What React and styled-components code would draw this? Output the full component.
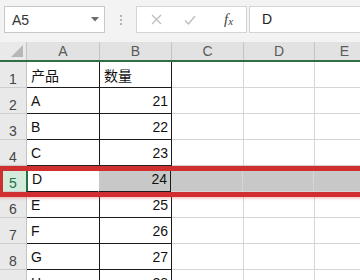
import React from 'react';
import styled, { createGlobalStyle } from 'styled-components';

const GlobalStyle = createGlobalStyle`
    html, body {
        margin: 0;
        padding: 0;
        background: #fff;
    }
    body {
        width: 360px;
        height: 280px;
        overflow: hidden;
        font-family: "Liberation Sans", "Noto Sans CJK SC", sans-serif;
    }
`;

const columns = ['A', 'B', 'C', 'D', 'E'];
const widths = [73, 72, 72, 71, 60];

const rows = [
    ['产品', '数量'],
    ['A', '21'],
    ['B', '22'],
    ['C', '23'],
    ['D', '24'],
    ['E', '25'],
    ['F', '26'],
    ['G', '27'],
    ['H', '28'],
];

const SELECTED_ROW = 5;

export default function App() {
    return (
        <Page>
            <GlobalStyle />
            <FormulaBar>
                <NameBox>
                    <NameText>A5</NameText>
                    <svg width="8" height="5" viewBox="0 0 8 5">
                        <path d="M0 0 L8 0 L4 4.5 Z" fill="#6b6b6b" />
                    </svg>
                </NameBox>
                <Grip>
                    <Dot />
                    <Dot />
                    <Dot />
                </Grip>
                <FxBox>
                    <svg width="11" height="11" viewBox="0 0 11 11">
                        <path d="M1 1 L10 10 M10 1 L1 10" stroke="#bdbdbd" strokeWidth="1.3" fill="none" />
                    </svg>
                    <svg width="12" height="10" viewBox="0 0 12 10">
                        <path d="M1 5.5 L4.5 9 L11 1" stroke="#bdbdbd" strokeWidth="1.3" fill="none" />
                    </svg>
                    <Fx>f<sub>x</sub></Fx>
                </FxBox>
                <FormulaInput>D</FormulaInput>
            </FormulaBar>

            <Sheet>
                <HeaderRow>
                    <Corner>
                        <svg width="12" height="12" viewBox="0 0 12 12">
                            <path d="M12 0 L12 12 L0 12 Z" fill="#b7b7b7" />
                        </svg>
                    </Corner>
                    {columns.map((c, i) => (
                        <ColHeader key={c} width={widths[i]}>{c}</ColHeader>
                    ))}
                </HeaderRow>

                {rows.map((row, r) => {
                    const num = r + 1;
                    const selected = num === SELECTED_ROW;
                    return (
                        <Row key={num}>
                            <RowHeader selected={selected}>{num}</RowHeader>
                            {columns.map((c, i) => {
                                const value = row[i];
                                const bordered = i < 2;
                                return (
                                    <Cell
                                        key={c}
                                        width={widths[i]}
                                        bordered={bordered}
                                        numeric={i === 1 && r > 0}
                                        highlight={selected && i > 0}
                                        active={selected && i === 0}
                                    >
                                        {value}
                                    </Cell>
                                );
                            })}
                        </Row>
                    );
                })}

                <Annotation />
            </Sheet>
        </Page>
    );
}

const Page = styled.div`
    width: 360px;
    height: 280px;
    overflow: hidden;
    background: #fff;
`;

const FormulaBar = styled.div`
    display: flex;
    align-items: flex-start;
    height: 42px;
    padding: 6px 0 0 4px;
    box-sizing: border-box;
    background: #f3f3f3;
`;

const NameBox = styled.div`
    display: flex;
    align-items: center;
    justify-content: space-between;
    width: 101px;
    height: 27px;
    box-sizing: border-box;
    padding: 0 5px 0 7px;
    background: #fff;
    border: 1px solid #c8c8c8;
`;

const NameText = styled.span`
    font-size: 14px;
    color: #333;
`;

const Grip = styled.div`
    display: flex;
    flex-direction: column;
    align-items: center;
    justify-content: center;
    gap: 2px;
    width: 31px;
    height: 27px;
`;

const Dot = styled.span`
    width: 2px;
    height: 2px;
    background: #b5b5b5;
`;

const FxBox = styled.div`
    display: flex;
    align-items: center;
    width: 111px;
    height: 27px;
    box-sizing: border-box;
    padding: 0 0 0 14px;
    gap: 22px;
    background: #fff;
    border: 1px solid #d4d4d4;
`;

const Fx = styled.span`
    margin-left: 6px;
    font-family: "Liberation Serif", serif;
    font-style: italic;
    font-size: 15px;
    color: #444;

    sub {
        font-size: 11px;
        vertical-align: -1px;
    }
`;

const FormulaInput = styled.div`
    flex: 1;
    margin-left: 2px;
    height: 27px;
    box-sizing: border-box;
    padding: 4px 0 0 12px;
    font-size: 14px;
    color: #222;
    background: #fff;
    border: 1px solid #d4d4d4;
    border-right: none;
`;

const Sheet = styled.div`
    position: relative;
`;

const HeaderRow = styled.div`
    display: flex;
    height: 20px;
    box-sizing: border-box;
    background: #e2e2e2;
    border-bottom: 2px solid #2f6f46;
`;

const Corner = styled.div`
    display: flex;
    align-items: flex-end;
    justify-content: flex-end;
    width: 27px;
    flex: none;
    box-sizing: border-box;
    padding: 0 3px 3px 0;
    background: #e9e9e9;
    border-right: 1px solid #c4c4c4;
`;

const ColHeader = styled.div`
    display: flex;
    align-items: flex-end;
    justify-content: center;
    width: ${({ width }) => width}px;
    flex: none;
    box-sizing: border-box;
    padding-bottom: 1px;
    font-size: 14px;
    line-height: 16px;
    color: #5a5a5a;
    border-right: 1px solid #c4c4c4;
`;

const Row = styled.div`
    display: flex;
    height: 26px;
`;

const RowHeader = styled.div`
    display: flex;
    align-items: flex-end;
    justify-content: center;
    width: 27px;
    flex: none;
    box-sizing: border-box;
    padding-bottom: 1px;
    font-size: 14px;
    line-height: 14px;
    color: ${({ selected }) => (selected ? '#217346' : '#444')};
    background: ${({ selected }) => (selected ? '#d4ebdb' : '#e9e9e9')};
    border-right: 1px solid #c4c4c4;
    border-bottom: 1px solid #cdcdcd;
`;

const Cell = styled.div`
    display: flex;
    align-items: center;
    justify-content: ${({ numeric }) => (numeric ? 'flex-end' : 'flex-start')};
    width: ${({ width }) => width}px;
    flex: none;
    box-sizing: border-box;
    padding: 1px 3px 0 4px;
    font-size: 14px;
    color: #111;
    white-space: nowrap;
    background: ${({ highlight }) => (highlight ? '#c8c8c8' : '#fff')};
    border-right: 1px solid ${({ bordered }) => (bordered ? '#1a1a1a' : '#d6d6d6')};
    border-bottom: 1px solid ${({ bordered }) => (bordered ? '#1a1a1a' : '#d6d6d6')};
    ${({ active }) => active && 'border-left: 2px solid #217346; margin-left: -1px; border-right-color: #fff;'}
`;

const Annotation = styled.div`
    position: absolute;
    top: 124px;
    left: -2px;
    right: -20px;
    height: 31px;
    box-sizing: border-box;
    border: 5px solid #cf2f31;
    box-shadow: 0 1px 3px rgba(230, 90, 90, 0.45);
    pointer-events: none;
`;
